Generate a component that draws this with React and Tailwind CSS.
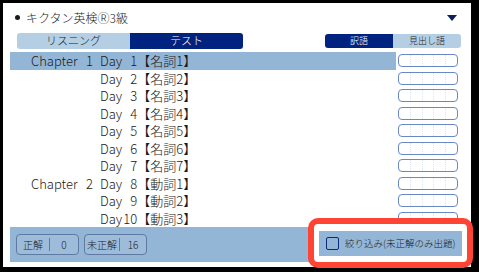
import React from "react";

const rows = [
  { ch: "1", day: "1", pos: "名詞1" },
  { ch: "", day: "2", pos: "名詞2" },
  { ch: "", day: "3", pos: "名詞3" },
  { ch: "", day: "4", pos: "名詞4" },
  { ch: "", day: "5", pos: "名詞5" },
  { ch: "", day: "6", pos: "名詞6" },
  { ch: "", day: "7", pos: "名詞7" },
  { ch: "2", day: "8", pos: "動詞1" },
  { ch: "", day: "9", pos: "動詞2" },
  { ch: "", day: "10", pos: "動詞3" },
];

function ScoreBox() {
  return (
    <div className="w-[60px] h-[13px] rounded-[4px] border border-[#6a87c6] bg-white flex">
      <div className="flex-1 border-r border-dotted border-[#dde3ee]" />
      <div className="flex-1 border-r border-dotted border-[#dde3ee]" />
      <div className="flex-1 border-r border-dotted border-[#dde3ee]" />
      <div className="flex-1 border-r border-dotted border-[#dde3ee]" />
      <div className="flex-1" />
    </div>
  );
}

export default function App() {
  return (
    <div
      className="w-[479px] h-[272px] bg-black pt-[3px] pl-[3px] pr-[8px] pb-[5px]"
      style={{ fontFamily: '"Noto Sans CJK JP", "Noto Sans", sans-serif' }}
    >
      <div className="relative w-full h-full bg-white flex flex-col text-[#1a1a1a] font-light">
        {/* Header */}
        <div className="h-[27px] flex items-center pl-[12px] pr-[14px] pt-[2px]">
          <span className="w-[5px] h-[5px] rounded-full bg-[#1a1a1a]" />
          <span className="ml-[6px] text-[12px] leading-none">キクタン英検Ⓡ3級</span>
          <span className="ml-auto w-0 h-0 border-l-[5px] border-r-[5px] border-t-[6px] border-l-transparent border-r-transparent border-t-[#0a1f5c]" />
        </div>

        {/* Tabs */}
        <div className="flex items-center pl-[14px] pr-[10px] h-[21px]">
          <div className="flex h-[16px] w-[226px] rounded-[3px] overflow-hidden text-[11px] leading-none">
            <div className="flex-1 bg-[#b4cfe4] flex items-center justify-center text-[#1a1a1a]">リスニング</div>
            <div className="flex-1 bg-[#00237f] flex items-center justify-center text-white">テスト</div>
          </div>
          <div className="ml-auto flex h-[14px] w-[136px] rounded-[3px] overflow-hidden text-[9px] leading-none">
            <div className="flex-1 bg-[#00237f] flex items-center justify-center text-white">訳語</div>
            <div className="flex-1 bg-[#b4cfe4] flex items-center justify-center text-[#1a1a1a]">見出し語</div>
          </div>
        </div>

        {/* List */}
        <div className="mt-[1px] h-[175px] overflow-hidden px-[7px]">
          {rows.map((r, i) => (
            <div key={i} className="h-[17.5px] flex items-center">
              <div
                className={
                  "h-full w-[386px] flex items-center text-[13px] leading-none " +
                  (i === 0 ? "bg-[#94b6d6]" : "")
                }
              >
                <span className="pl-[21px] w-[90px] flex shrink-0">
                  {r.ch && (
                    <>
                      <span>Chapter</span>
                      <span className="ml-auto pr-[7px]">{r.ch}</span>
                    </>
                  )}
                </span>
                <span>Day</span>
                <span className="w-[15px] text-right">{r.day}</span>
                <span>【{r.pos}】</span>
              </div>
              <div className="ml-[2px]">
                <ScoreBox />
              </div>
            </div>
          ))}
        </div>

        {/* Bottom bar */}
        <div className="mx-[7px] h-[35px] bg-[#94b6d6] flex items-center pl-[6px] text-[10px] leading-none">
          <div className="flex items-center h-[21px] w-[63px] rounded-[4px] border border-[#5e7aa3] bg-[#9dbcda]">
            <span className="px-[6px] h-[13px] flex items-center border-r border-[#5e7aa3]">正解</span>
            <span className="flex-1 text-center">0</span>
          </div>
          <div className="ml-[5px] flex items-center h-[21px] w-[63px] rounded-[4px] border border-[#5e7aa3] bg-[#9dbcda]">
            <span className="px-[2px] h-[13px] flex items-center border-r border-[#5e7aa3]">未正解</span>
            <span className="flex-1 text-center">16</span>
          </div>
        </div>

        {/* Highlight overlay around the filter button */}
        <div className="absolute left-[305px] top-[215px] w-[165px] h-[50px] rounded-[10px] border-[6px] border-[#ff4433] bg-white pl-[5px] pt-[7px]">
          <div className="h-[25px] w-[143px] bg-[#94b6d6] flex items-center pl-[7px] text-[9.5px] leading-none">
            <span className="w-[13px] h-[13px] rounded-[2px] border-[1.5px] border-[#0a2a7a]" />
            <span className="ml-[6px] whitespace-nowrap">絞り込み(未正解のみ出題)</span>
          </div>
        </div>
      </div>
    </div>
  );
}
